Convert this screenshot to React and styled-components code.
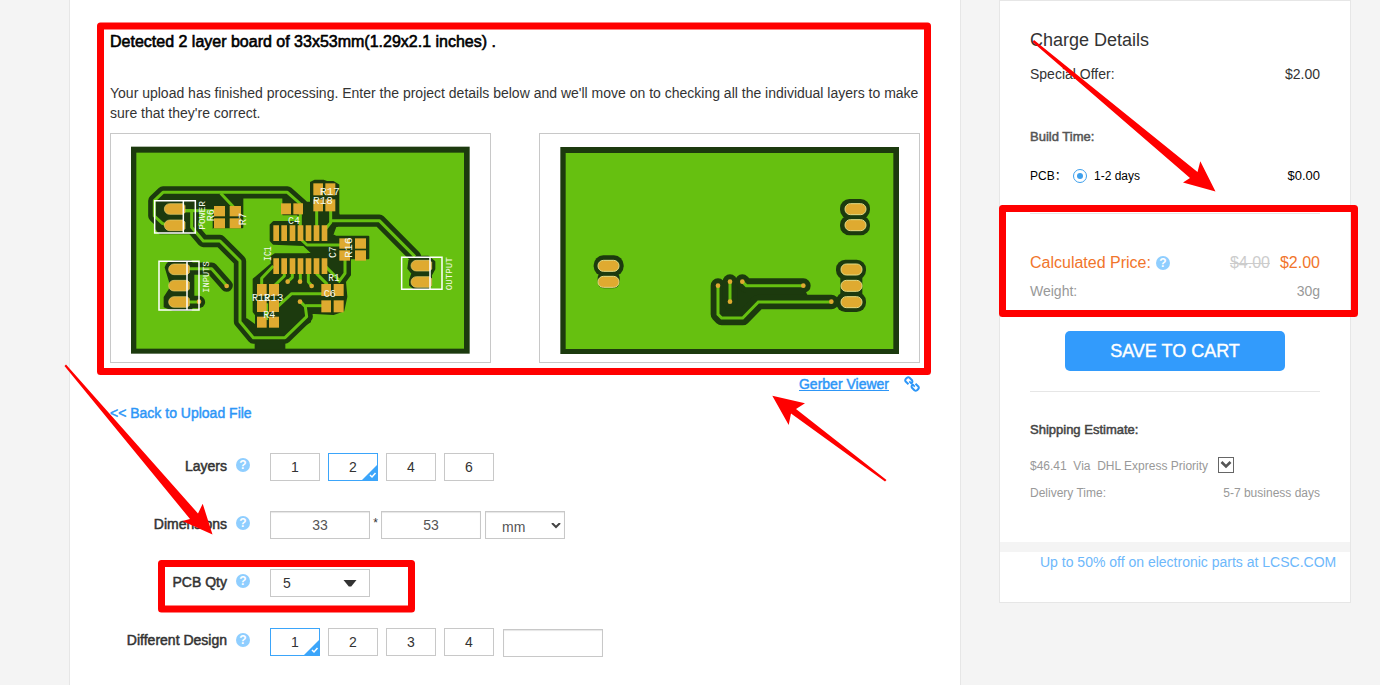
import React from "react";
import styled, { createGlobalStyle } from "styled-components";

const GlobalStyle = createGlobalStyle`
  * { box-sizing: border-box; }
  body {
    margin: 0;
    background: #f4f4f4;
    color: #333;
    font-family: "Liberation Sans", Arial, "Noto Sans CJK SC", sans-serif;
    font-size: 14px;
  }
`;

const Page = styled.div`
  position: relative;
  display: flex;
  align-items: flex-start;
  gap: 38px;
  width: 1380px;
  height: 685px;
  padding-left: 69px;
  overflow: hidden;
`;

const Main = styled.main`
  width: 892px;
  height: 685px;
  padding: 32px 40px 0;
  background: #fff;
  border: solid #e6e6e6;
  border-width: 0 1px;
`;

const Title = styled.h1`
  margin: 0 0 31px;
  font-size: 16px;
  font-weight: 400;
  line-height: 20px;
  color: #000;
  -webkit-text-stroke: 0.6px #000;
`;

const Intro = styled.p`
  margin: 0 0 10px;
  line-height: 20px;
  white-space: nowrap;
`;

const Gallery = styled.div`
  display: flex;
  justify-content: space-between;
`;

const Preview = styled.div`
  width: 381px;
  height: 230px;
  border: 1px solid #c8c8c8;

  svg { display: block; }
`;

const ViewerRow = styled.div`
  display: flex;
  justify-content: flex-end;
  align-items: center;
  gap: 15px;
  height: 20px;
  margin-top: 11px;
`;

const Link = styled.a`
  color: #2d96f7;
  font-size: 14px;
  line-height: 20px;
  text-decoration: ${(p) => (p.$underline ? "underline" : "none")};
  -webkit-text-stroke: 0.45px #2d96f7;
`;

const BackRow = styled.div`
  height: 20px;
  margin: 9px 0 30px;
`;

const FormRow = styled.div`
  display: flex;
  height: 28px;
  margin-bottom: ${(p) => p.$gap || 30}px;
`;

const Label = styled.div`
  width: 117px;
  line-height: ${(p) => p.$line || 27}px;
  text-align: right;
  white-space: nowrap;
  -webkit-text-stroke: 0.5px #333;
`;

const HelpSlot = styled.div`
  width: 43px;
  padding: 5px 0 0 9px;
`;

const HelpMark = styled.span`
  display: block;
  width: 14px;
  height: 14px;
  border-radius: 50%;
  background: #8fceff;
  color: #fff;
  font-size: 12px;
  font-weight: 700;
  line-height: 14px;
  text-align: center;
`;

const Options = styled.div`
  display: flex;
  gap: 8px;
`;

const OptionBox = styled.div`
  position: relative;
  width: 50px;
  height: 28px;
  border: 1px solid ${(p) => (p.$on ? "#3ba5fa" : "#c8c8c8")};
  line-height: 27px;
  text-align: center;

  svg { position: absolute; right: -1px; bottom: -1px; }
`;

const Field = styled.div`
  width: 100px;
  height: 28px;
  margin: ${(p) => p.$margin || 0};
  border: 1px solid #c8c8c8;
  box-shadow: inset 0 1px 1px rgba(0, 0, 0, 0.1);
  color: #555;
  line-height: 27px;
  text-align: center;
`;

const Times = styled.span`
  width: 11px;
  font-size: 12px;
  line-height: 25px;
  text-align: center;
`;

const Dropdown = styled.div`
  display: flex;
  align-items: center;
  justify-content: space-between;
  width: ${(p) => p.$width}px;
  height: 28px;
  margin-left: ${(p) => p.$left || 0}px;
  padding: ${(p) => p.$pad};
  border: 1px solid #c8c8c8;
  box-shadow: ${(p) => (p.$inset ? "inset 0 1px 1px rgba(0,0,0,.1)" : "none")};
  color: ${(p) => p.$color || "#333"};
`;

const Side = styled.aside`
  width: 352px;
  height: 603px;
  border: 1px solid #e6e6e6;
  background: #fff;
`;

const Charges = styled.div`
  height: 541px;
  padding: 28px 30px 0;
`;

const ChargeTitle = styled.h2`
  margin: 0;
  font-size: 18px;
  font-weight: 400;
  line-height: 22px;
`;

const Line = styled.div`
  display: flex;
  justify-content: space-between;
  align-items: center;
  height: 20px;
  margin-top: ${(p) => p.$top || 0}px;
  font-size: ${(p) => p.$size || 14}px;
  line-height: 20px;
  color: ${(p) => p.$color || "#333"};
  white-space: pre;
`;

const Group = styled.div`
  display: flex;
  align-items: center;
  gap: ${(p) => p.$gap}px;
`;

const SectionName = styled.div`
  height: 20px;
  margin-top: ${(p) => p.$top}px;
  font-size: 13px;
  line-height: 20px;
  color: ${(p) => p.$color};
  -webkit-text-stroke: 0.5px ${(p) => p.$color};
`;

const Radio = styled.span`
  display: grid;
  place-items: center;
  width: 14px;
  height: 14px;
  border: 1px solid #3d9fec;
  border-radius: 50%;

  &::after {
    content: "";
    width: 6px;
    height: 6px;
    border-radius: 50%;
    background: #3d9fec;
  }
`;

const PcbLabel = styled.span`
  width: 43px;
`;

const BuildPrice = styled.span`
  font-size: 13px;
`;

const Divider = styled.div`
  height: 1px;
  margin-top: ${(p) => p.$top}px;
  background: #e6e6e6;
`;

const OldPrice = styled.span`
  color: #ccc;
  text-decoration: line-through;
`;

const SaveButton = styled.button`
  display: block;
  width: 220px;
  height: 40px;
  margin: 30px auto 0;
  padding: 0;
  border: 0;
  border-radius: 5px;
  background: #329bfc;
  color: #fff;
  font-family: inherit;
  font-size: 18px;
  line-height: 40px;
  -webkit-text-stroke: 0.4px #fff;
`;

const SelectToggle = styled.span`
  display: grid;
  place-items: center;
  width: 16px;
  height: 16px;
  margin-top: -2px;
  border: 1px solid #666;
`;

const Band = styled.div`
  height: 10px;
  background: #f4f4f4;
`;

const Promo = styled.div`
  padding-left: 40px;
  color: #6db8fb;
  line-height: 20px;
  white-space: nowrap;
`;

const Markup = styled.svg`
  position: absolute;
  left: 0;
  top: 0;
  pointer-events: none;
`;

const DARK = "#1c3a0e";
const GREEN = "#66c010";
const GOLD = "#dfaa30";

const tracks = [
  "M135 258L112 250L88 228V182L114 157H487L530 195",
  "M178 212H200V262L235 303H285L345 363V545L385 593H480L545 530L541 500L526 485",
  "M175 386H260L305 437",
  "M175 486H222",
  "M617 242H763L870 350",
];
const fine = [
  "M178 212H272", "M287 160L325 200", "M526 215V262", "M575 205V262", "M617 205V248L599 270",
  "M530 300L546 315H650", "M660 360V400L640 427", "M445 378L410 415V440", "M478 400V408L447 438",
  "M502 400V412L488 425", "M526 400V425", "M550 400V425L560 437", "M574 400L607 433",
  "M602 380L645 423", "M458 500L500 461H600", "M541 497H600", "M425 490V540",
];
const pins = [445, 469, 494, 518, 542, 566, 590];
const smd = [
  [267, 198, 33, 31], [314, 198, 34, 31], [267, 235, 33, 30], [314, 235, 34, 30],
  [468, 190, 30, 33], [505, 190, 29, 33],
  [565, 130, 29, 36], [601, 130, 30, 36], [565, 178, 29, 36], [601, 178, 30, 36],
  [643, 295, 32, 31], [690, 295, 33, 31], [643, 331, 32, 31], [690, 331, 33, 31],
  [396, 432, 29, 35], [432, 432, 30, 35], [396, 480, 29, 36], [432, 480, 30, 36],
  [396, 530, 29, 33], [432, 530, 30, 33],
  [589, 432, 29, 36], [626, 432, 30, 36], [589, 481, 29, 36], [626, 481, 30, 36],
];
const halfPads = [[118, 191], [118, 240], [131, 372], [131, 421], [131, 470], [858, 361], [858, 410]];
const vias = [[305, 438], [222, 485], [488, 425], [525, 425], [560, 438], [525, 485]];
const silk = [
  [240, 269, "POWER", 86, true, 28], [267, 244, "R6", 37, true, 32], [364, 256, "R7", 38, true, 32],
  [253, 458, "INPUTS", 94, true, 28], [437, 363, "IC1", 44, true, 32], [489, 253, "C4", 36, false, 32],
  [585, 166, "R17", 60, false, 32], [564, 193, "R18", 60, false, 32], [682, 354, "R16", 62, true, 32],
  [632, 354, "C7", 35, true, 30], [610, 423, "R1", 34, false, 32], [596, 471, "C6", 37, false, 32],
  [381, 484, "R12", 55, false, 32], [417, 484, "R13", 58, false, 32], [415, 534, "R4", 36, false, 32],
  [982, 451, "OUTPUT", 99, true, 28],
];

function Board() {
  return (
    <>
      <rect x="18" y="20" width="1016" height="621" fill={DARK} />
      <rect x="34" y="38" width="983" height="588" fill={GREEN} />
    </>
  );
}

function FrontBoard() {
  return (
    <svg width="379" height="228" viewBox="-42 -18 1137 684">
      <Board />
      <g fill="none" stroke={DARK} strokeWidth="37" strokeLinejoin="round" strokeLinecap="round">
        {tracks.map((d) => <path key={d} d={d} />)}
      </g>
      <g fill={DARK} stroke={DARK} strokeWidth="6" strokeLinejoin="round">
        <path d="M96 190L120 168H352V262H262V208L225 202L215 262L225 280H105L90 262Z" />
        <path d="M475 170H495L545 188H558V128L570 122H595L605 126H625L640 135V220L642 228L636 258H632L622 285L632 290H730V355H675V405L660 425L664 470L655 512L625 522L555 518V545L480 590H405L365 545V538L393 558V525L386 515V418L440 372V350L450 343H552L535 315L445 311L437 302V255L446 246H520L535 225H475Z" />
        <path d="M122 382Q125 366 150 364H198L205 392V480L198 510H145L119 500V472L135 447V425Z" />
        <path d="M392 598H478V632H392Z" />
        <path d="M853 362L875 350H910L928 365V387L918 405V435L910 445H867L855 435V420L862 400L850 385Z" />
      </g>
      <path d="M437 318H535L557 339H437Z M222 213H263V264H240L222 248Z M470 226H517V243H470Z" fill={GREEN} />
      <g fill="none" stroke={GREEN} strokeWidth="9" strokeLinejoin="round">
        {tracks.map((d) => <path key={d} d={d} />)}
        {fine.map((d) => <path key={d} d={d} />)}
      </g>
      <g fill={GOLD}>
        {pins.map((x) => <path key={x} d={`M${x} 256h17v47h-17zM${x} 355h17v47h-17z`} />)}
        {smd.map(([x, y, w, h]) => <rect key={`${x}-${y}`} x={x} y={y} width={w} height={h} />)}
        {vias.map(([x, y]) => <circle key={`${x}-${y}`} cx={x} cy={y} r="7" />)}
        {halfPads.map(([x, y]) => (
          <path key={`${x}-${y}`} stroke="#e3cf70" strokeWidth="2" d={`M${x + 16} ${y}h40l6 6v20l-6 6h-40a16 16 0 0 1 0 -32z`} />
        ))}
      </g>
      <path
        d="M89 182H211V279H89ZM175 182V279M102 364H222V510H102ZM186 364V510M830 352H951V448H830ZM915 352V448"
        fill="none" stroke="#fff" strokeWidth="4.500"
      />
      <g fill="#f3f8ea" fontFamily="'Liberation Mono', monospace">
        {silk.map(([x, y, t, len, up, size]) => (
          <text
            key={t} fontSize={size} textLength={len} lengthAdjust="spacingAndGlyphs"
            transform={`translate(${x} ${y})${up ? " rotate(-90)" : ""}`}
          >{t}</text>
        ))}
      </g>
    </svg>
  );
}

const backPads = [[945, 221], [945, 269], [204, 391], [204, 439], [933, 402], [933, 451], [933, 500]];
const backVias = [[564, 467], [600, 455], [637, 455], [820, 467], [600, 515], [904, 515]];
const backTracks = ["M564 467V553L575 564H638L685 516H904", "M600 455V515", "M637 455L649 467H820"];

function BackBoard() {
  return (
    <svg width="379" height="228" viewBox="30 12 1137 684">
      <g transform="translate(73 31)"><Board /></g>
      <g fill={DARK}>
        <rect x="930" y="207" width="90" height="60" rx="28" />
        <rect x="930" y="256" width="90" height="60" rx="28" />
        <rect x="945" y="235" width="60" height="50" />
        <rect x="191" y="376" width="90" height="62" rx="29" />
        <rect x="203" y="425" width="66" height="50" rx="20" />
        <rect x="918" y="389" width="90" height="60" rx="28" />
        <rect x="931" y="430" width="66" height="75" rx="12" />
        <rect x="918" y="486" width="90" height="60" rx="28" />
        <path d="M580 450H650L665 470H820L835 500H900L880 515H685L640 560H570Z" />
        <path d="M895 503H935V528H895Z" />
      </g>
      <g fill="none" stroke={DARK} strokeWidth="44" strokeLinejoin="round" strokeLinecap="round">
        {backTracks.map((d) => <path key={d} d={d} />)}
      </g>
      <g fill="none" stroke={GREEN} strokeWidth="9">
        {backTracks.map((d) => <path key={d} d={d} />)}
      </g>
      <g fill={GOLD}>
        {backVias.map(([x, y]) => <circle key={`${x}-${y}`} cx={x} cy={y} r="7" />)}
        {backPads.map(([x, y]) => (
          <rect key={`${x}-${y}`} x={x} y={y} width="63" height="33" rx="16" stroke="#e3dc86" strokeWidth="3" />
        ))}
      </g>
    </svg>
  );
}

function Tick() {
  return (
    <svg width="18" height="18" viewBox="0 0 18 18">
      <path d="M18 1V18H1Z" fill="#3ba5fa" />
      <path d="M10 12L12 14L15.5 10" fill="none" stroke="#fff" strokeWidth="1.5" />
    </svg>
  );
}

function ChainIcon() {
  return (
    <svg width="16" height="16" viewBox="0 0 16 16" fill="none" stroke="#2d96f7" strokeWidth="2">
      <path d="M4.500 8.200L1.700 5.600Q.7 4.300 1.700 3L3 1.700Q4.300.7 5.600 1.700L8 4.200Q8.900 5.600 7.900 6.800L6.800 7.800" />
      <path d="M11.500 7.800L14.300 10.400Q15.300 11.700 14.300 13L13 14.300Q11.700 15.300 10.400 14.300L8 11.800Q7.100 10.400 8.100 9.200L9.200 8.200" />
      <path d="M5.300 5.400L7.600 7.700M8.600 8.400L10.800 10.600" strokeWidth="1.700" />
    </svg>
  );
}

function Choices({ values, selected }) {
  return (
    <Options>
      {values.map((v) => (
        <OptionBox key={v} $on={v === selected}>{v}{v === selected && <Tick />}</OptionBox>
      ))}
    </Options>
  );
}

function Row({ label, gap, line, children }) {
  return (
    <FormRow $gap={gap}>
      <Label $line={line}>{label}</Label>
      <HelpSlot><HelpMark>?</HelpMark></HelpSlot>
      {children}
    </FormRow>
  );
}

export default function App() {
  return (
    <Page>
      <GlobalStyle />
      <Main>
        <Title>Detected 2 layer board of 33x53mm(1.29x2.1 inches) .</Title>
        <Intro>
          Your upload has finished processing. Enter the project details below and we'll move on to checking all the individual layers to make
          <br />
          sure that they're correct.
        </Intro>
        <Gallery>
          <Preview><FrontBoard /></Preview>
          <Preview><BackBoard /></Preview>
        </Gallery>
        <ViewerRow>
          <Link $underline>Gerber Viewer</Link>
          <ChainIcon />
        </ViewerRow>
        <BackRow><Link>&lt;&lt; Back to Upload File</Link></BackRow>
        <Row label="Layers"><Choices values={[1, 2, 4, 6]} selected={2} /></Row>
        <Row label="Dimensions">
          <Field>33</Field>
          <Times>*</Times>
          <Field>53</Field>
          <Dropdown $width={80} $left={4} $pad="3px 3px 0 16px" $inset $color="#555">
            mm
            <svg width="10" height="8" viewBox="0 0 10 8"><path d="M1 0L5 4L9 0" fill="none" stroke="#444" strokeWidth="2" /></svg>
          </Dropdown>
        </Row>
        <Row label="PCB Qty" gap={31}>
          <Dropdown $width={100} $pad="0 12px 0 12px">
            5
            <svg width="14" height="8" viewBox="0 0 14 8"><path d="M.5 1H13.500L8.200 7.500H5.800Z" fill="#333" /></svg>
          </Dropdown>
        </Row>
        <Row label="Different Design" line={25}>
          <Choices values={[1, 2, 3, 4]} selected={1} />
          <Field $margin="1px 0 0 9px" />
        </Row>
      </Main>

      <Side>
        <Charges>
          <ChargeTitle>Charge Details</ChargeTitle>
          <Line $top={13}><span>Special Offer:</span><span>$2.00</span></Line>
          <SectionName $top={43} $color="#555">Build Time:</SectionName>
          <Line $top={19} $size={12} $color="#000">
            <Group $gap={0}>
              <PcbLabel>PCB：</PcbLabel>
              <Group $gap={7}><Radio />1-2 days</Group>
            </Group>
            <BuildPrice>$0.00</BuildPrice>
          </Line>
          <Divider $top={27} />
          <Line $top={39} $size={16} $color="#f1752b">
            <Group $gap={5}>Calculated Price:<HelpMark>?</HelpMark></Group>
            <Group $gap={10}><OldPrice>$4.00</OldPrice>$2.00</Group>
          </Line>
          <Line $top={8} $color="#999"><span>Weight:</span><span>30g</span></Line>
          <SaveButton>SAVE TO CART</SaveButton>
          <Divider $top={20} />
          <SectionName $top={28} $color="#444">Shipping Estimate:</SectionName>
          <Line $top={16} $size={12} $color="#999">
            <Group $gap={10}>
              $46.41  Via  DHL Express Priority
              <SelectToggle>
                <svg width="12" height="8" viewBox="0 0 12 8"><path d="M1.500 1L6 5.500L10.500 1" fill="none" stroke="#555" strokeWidth="2.600" /></svg>
              </SelectToggle>
            </Group>
          </Line>
          <Line $top={7} $size={12} $color="#999"><span>Delivery Time:</span><span>5-7 business days</span></Line>
        </Charges>
        <Band />
        <Promo>Up to 50% off on electronic parts at LCSC.COM</Promo>
      </Side>

      <Markup width="1380" height="685">
        <g fill="none" stroke="#ff0000" strokeWidth="7" strokeLinejoin="round">
          <rect x="100.500" y="26" width="827" height="345.500" />
          <rect x="1002.500" y="208.500" width="352" height="105" />
          <rect x="161.500" y="563.500" width="250" height="45.500" />
        </g>
        <g fill="#ff0000">
          <path d="M1034 40L1197.500 172L1200.300 161.300L1215.500 191.500L1183 182.500L1190 178L1032.500 42Z" />
          <path d="M66 364.500L198 513.500L202.700 503.700L212.500 534.500L182.300 521L190 519L64.500 366Z" />
          <path d="M772.300 395.700L805 403.300L796 409L886.500 480L885 481.500L791 413.500L788.700 425Z" />
        </g>
      </Markup>
    </Page>
  );
}
